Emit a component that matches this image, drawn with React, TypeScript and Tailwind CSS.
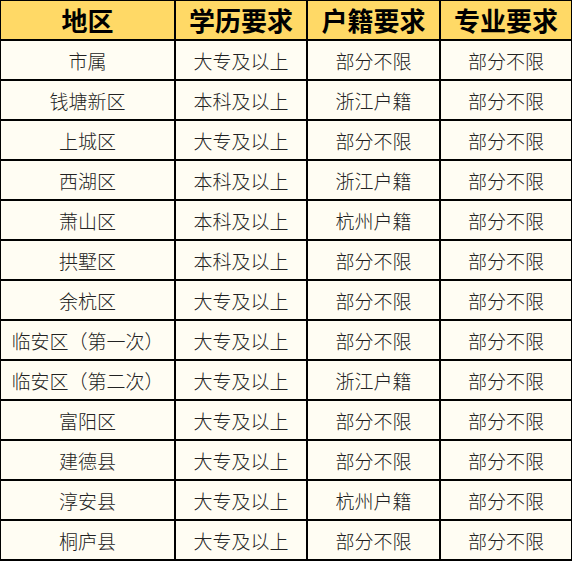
const HEADERS = ["地区", "学历要求", "户籍要求", "专业要求"];

const ROWS: Array<[string, string, string, string]> = [
  ["市属", "大专及以上", "部分不限", "部分不限"],
  ["钱塘新区", "本科及以上", "浙江户籍", "部分不限"],
  ["上城区", "大专及以上", "部分不限", "部分不限"],
  ["西湖区", "本科及以上", "浙江户籍", "部分不限"],
  ["萧山区", "本科及以上", "杭州户籍", "部分不限"],
  ["拱墅区", "本科及以上", "部分不限", "部分不限"],
  ["余杭区", "大专及以上", "部分不限", "部分不限"],
  ["临安区（第一次）", "大专及以上", "部分不限", "部分不限"],
  ["临安区（第二次）", "大专及以上", "浙江户籍", "部分不限"],
  ["富阳区", "大专及以上", "部分不限", "部分不限"],
  ["建德县", "大专及以上", "部分不限", "部分不限"],
  ["淳安县", "大专及以上", "杭州户籍", "部分不限"],
  ["桐庐县", "大专及以上", "部分不限", "部分不限"],
];

export default function App() {
  return (
    <div
      className="grid h-[561px] w-[572px] grid-cols-[173px_130px_131px_130px] grid-rows-[repeat(14,38px)] gap-[2px] bg-black pt-[1px] pl-[1px] pr-[1px] pb-[2px]"
      style={{ fontFamily: '"Noto Sans CJK SC", sans-serif' }}
    >
      {HEADERS.map((h) => (
        <div
          key={h}
          className="flex items-center justify-center bg-[#ffd966] text-[26px] font-bold leading-none text-black"
        >
          {h}
        </div>
      ))}
      {ROWS.map((row, i) =>
        row.map((cell, j) => (
          <div
            key={`${i}-${j}`}
            className="flex items-center justify-center whitespace-nowrap bg-[#fffdf3] pt-[1px] text-[19px] font-light leading-none text-[#222]"
          >
            {cell}
          </div>
        ))
      )}
    </div>
  );
}
